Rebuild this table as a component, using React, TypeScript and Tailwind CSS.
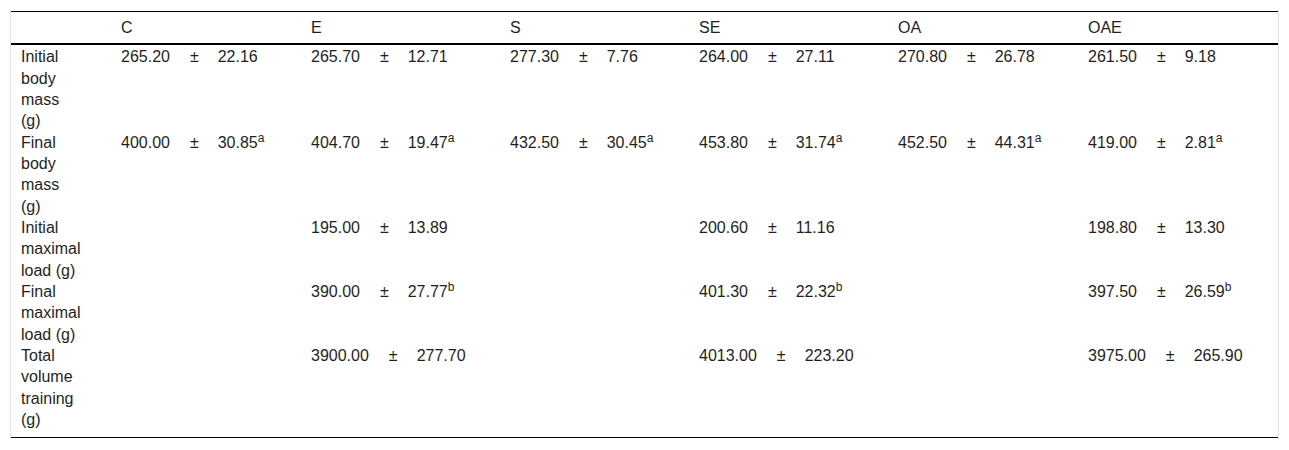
import React from "react";

type Cell = { v: string; sd: string; sup?: string } | null;

const rows: { label: string; cells: Cell[] }[] = [
  {
    label: "Initial body mass (g)",
    cells: [
      { v: "265.20", sd: "22.16" },
      { v: "265.70", sd: "12.71" },
      { v: "277.30", sd: "7.76" },
      { v: "264.00", sd: "27.11" },
      { v: "270.80", sd: "26.78" },
      { v: "261.50", sd: "9.18" },
    ],
  },
  {
    label: "Final body mass (g)",
    cells: [
      { v: "400.00", sd: "30.85", sup: "a" },
      { v: "404.70", sd: "19.47", sup: "a" },
      { v: "432.50", sd: "30.45", sup: "a" },
      { v: "453.80", sd: "31.74", sup: "a" },
      { v: "452.50", sd: "44.31", sup: "a" },
      { v: "419.00", sd: "2.81", sup: "a" },
    ],
  },
  {
    label: "Initial maximal load (g)",
    cells: [
      null,
      { v: "195.00", sd: "13.89" },
      null,
      { v: "200.60", sd: "11.16" },
      null,
      { v: "198.80", sd: "13.30" },
    ],
  },
  {
    label: "Final maximal load (g)",
    cells: [
      null,
      { v: "390.00", sd: "27.77", sup: "b" },
      null,
      { v: "401.30", sd: "22.32", sup: "b" },
      null,
      { v: "397.50", sd: "26.59", sup: "b" },
    ],
  },
  {
    label: "Total volume training (g)",
    cells: [
      null,
      { v: "3900.00", sd: "277.70" },
      null,
      { v: "4013.00", sd: "223.20" },
      null,
      { v: "3975.00", sd: "265.90" },
    ],
  },
];

const headers = ["C", "E", "S", "SE", "OA", "OAE"];

const gridCols = "grid grid-cols-[100px_190px_199px_189px_199px_190px_200px]";

export default function App() {
  return (
    <div
      className="bg-white w-[1289px] h-[450px] pt-[10px] pl-[10px] text-[#1f1f1f] text-[16px] leading-[21.33px]"
      style={{ fontFamily: '"Liberation Sans", Arial, sans-serif' }}
    >
      <div className="w-[1269px] border-x border-[#e4e4e4] pt-[1px] pb-[1px]">
        <div className="w-[1267px] border-t border-b border-black">
          <div className={`${gridCols} pt-[5px] pb-[5px] border-b-2 border-black`}>
            <div className="pl-[10px]" />
            {headers.map((h) => (
              <div key={h} className="pl-[10px]">
                {h}
              </div>
            ))}
          </div>
          <div className="pt-[1px] pb-[7px]">
            {rows.map((r) => (
              <div key={r.label} className={`${gridCols} items-start`}>
                <div className="pl-[10px]">
                  <div className="w-[58px]">{r.label}</div>
                </div>
                {r.cells.map((c, i) => (
                  <div key={i} className="pl-[10px] flex whitespace-nowrap">
                    {c && (
                      <>
                        <span className="mr-[20px]">{c.v}</span>
                        <span className="mr-[19px]">±</span>
                        <span>
                          {c.sd}
                          {c.sup && <sup>{c.sup}</sup>}
                        </span>
                      </>
                    )}
                  </div>
                ))}
              </div>
            ))}
          </div>
        </div>
      </div>
    </div>
  );
}
